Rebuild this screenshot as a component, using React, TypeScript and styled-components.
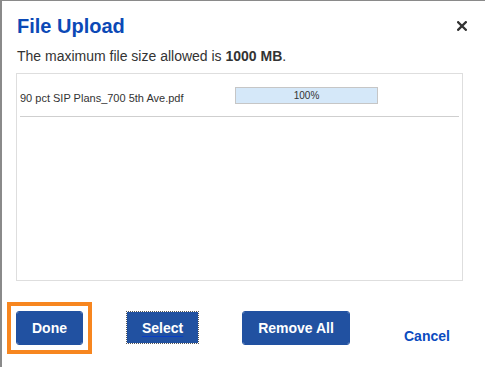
import React from "react";
import styled, { createGlobalStyle } from "styled-components";

const Global = createGlobalStyle`
  html, body { margin: 0; padding: 0; background: #ffffff; }
  * { box-sizing: border-box; }
`;

const Dialog = styled.div`
  width: 485px;
  height: 367px;
  background: #ffffff;
  border-top: 1px solid #8a8a8a;
  border-left: 2px solid #8a8a8a;
  font-family: "Liberation Sans", Arial, sans-serif;
  color: #333333;
  display: flex;
  flex-direction: column;
`;

const Header = styled.div`
  display: flex;
  justify-content: space-between;
  align-items: flex-start;
  padding: 14px 18px 0 15px;
`;

const Title = styled.h2`
  margin: 0;
  font-size: 20px;
  line-height: 23px;
  font-weight: bold;
  color: #0b49b6;
`;

const CloseButton = styled.button`
  border: 0;
  padding: 0;
  background: transparent;
  margin-top: 6px;
  width: 10px;
  height: 10px;
  display: flex;
  cursor: pointer;
`;

const Body = styled.div`
  padding: 0 22px 0 14px;
`;

const Note = styled.p`
  margin: 10px 0 0 1px;
  font-size: 14px;
  line-height: 16px;
  color: #333333;
  strong { font-weight: bold; }
`;

const FileBox = styled.div`
  margin-top: 9px;
  height: 208px;
  border: 1px solid #dedede;
  padding: 0 3px;
`;

const FileRow = styled.div`
  display: grid;
  grid-template-columns: 215px 143px;
  align-items: center;
  height: 43px;
  border-bottom: 1px solid #cfcfcf;
`;

const FileName = styled.span`
  font-size: 11px;
  line-height: 13px;
  padding-top: 6px;
  color: #333333;
  white-space: nowrap;
`;

const Progress = styled.div`
  height: 17px;
  border: 1px solid #c6c6c6;
  background: #d5e8f9;
  font-size: 10px;
  line-height: 15px;
  text-align: center;
  color: #333333;
`;

const Footer = styled.div`
  display: flex;
  align-items: flex-start;
  gap: 43px;
  padding: 30px 0 0 14px;
`;

const ActionButton = styled.button<{ $w: number; $h?: number; $focus?: "ring" | "dotted" }>`
  position: relative;
  width: ${(p) => p.$w}px;
  height: ${(p) => p.$h ?? 34}px;
  padding: 0;
  background: #2151a1;
  background-clip: padding-box;
  color: #ffffff;
  font-family: "Liberation Sans", Arial, sans-serif;
  font-size: 14px;
  font-weight: bold;
  border: ${(p) => (p.$focus === "dotted" ? "1px dotted #555555" : "1px solid #2151a1")};
  border-radius: ${(p) => (p.$focus === "dotted" ? "0" : "3px")};
  outline: none;
  text-decoration: ${(p) => (p.$focus === "dotted" ? "underline" : "none")};
  text-decoration-color: #0a3fc4;
  text-decoration-thickness: 1px;
  text-underline-offset: 3px;
  cursor: pointer;

  &::after {
    content: "";
    display: ${(p) => (p.$focus === "ring" ? "block" : "none")};
    position: absolute;
    inset: -10px;
    border: 4px solid #f7861f;
    pointer-events: none;
  }
`;

const CancelLink = styled.button`
  border: 0;
  background: transparent;
  padding: 17px 11px 0;
  font-family: "Liberation Sans", Arial, sans-serif;
  font-size: 14px;
  line-height: 16px;
  font-weight: bold;
  color: #0b4bbf;
  cursor: pointer;
`;

export default function App() {
  return (
    <>
      <Global />
      <Dialog>
        <Header>
          <Title>File Upload</Title>
          <CloseButton aria-label="Close">
            <svg width="10" height="10" viewBox="0 0 10 10">
              <path d="M1.2 1.2 L8.8 8.8 M8.8 1.2 L1.2 8.8" stroke="#333" strokeWidth="2.3" strokeLinecap="square" />
            </svg>
          </CloseButton>
        </Header>
        <Body>
          <Note>
            The maximum file size allowed is <strong>1000 MB</strong>.
          </Note>
          <FileBox>
            <FileRow>
              <FileName>90 pct SIP Plans_700 5th Ave.pdf</FileName>
              <Progress>100%</Progress>
            </FileRow>
          </FileBox>
        </Body>
        <Footer>
          <ActionButton $w={67} $focus="ring">Done</ActionButton>
          <ActionButton $w={73} $h={33} $focus="dotted">Select</ActionButton>
          <ActionButton $w={108}>Remove All</ActionButton>
          <CancelLink>Cancel</CancelLink>
        </Footer>
      </Dialog>
    </>
  );
}
